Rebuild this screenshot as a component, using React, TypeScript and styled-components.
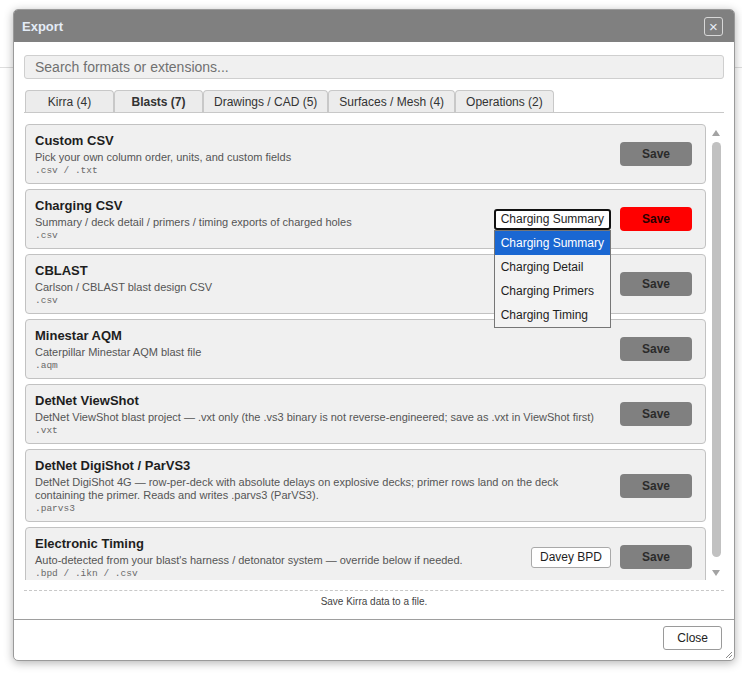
import React from 'react'
import styled, { createGlobalStyle } from 'styled-components'

interface ExportFormat {
  name: string
  description: string
  extensions: string
  options?: string[]
  picker?: string
  open?: boolean
  highlight?: boolean
}

const tabs = [
  { label: 'Kirra (4)' },
  { label: 'Blasts (7)', active: true },
  { label: 'Drawings / CAD (5)' },
  { label: 'Surfaces / Mesh (4)' },
  { label: 'Operations (2)' },
]

const formats: ExportFormat[] = [
  {
    name: 'Custom CSV',
    description: 'Pick your own column order, units, and custom fields',
    extensions: '.csv / .txt',
  },
  {
    name: 'Charging CSV',
    description: 'Summary / deck detail / primers / timing exports of charged holes',
    extensions: '.csv',
    options: ['Charging Summary', 'Charging Detail', 'Charging Primers', 'Charging Timing'],
    open: true,
    highlight: true,
  },
  {
    name: 'CBLAST',
    description: 'Carlson / CBLAST blast design CSV',
    extensions: '.csv',
  },
  {
    name: 'Minestar AQM',
    description: 'Caterpillar Minestar AQM blast file',
    extensions: '.aqm',
  },
  {
    name: 'DetNet ViewShot',
    description:
      'DetNet ViewShot blast project — .vxt only (the .vs3 binary is not reverse-engineered; save as .vxt in ViewShot first)',
    extensions: '.vxt',
  },
  {
    name: 'DetNet DigiShot / ParVS3',
    description:
      'DetNet DigiShot 4G — row-per-deck with absolute delays on explosive decks; primer rows land on the deck containing the primer. Reads and writes .parvs3 (ParVS3).',
    extensions: '.parvs3',
  },
  {
    name: 'Electronic Timing',
    description: "Auto-detected from your blast's harness / detonator system — override below if needed.",
    extensions: '.bpd / .ikn / .csv',
    picker: 'Davey BPD',
  },
]

const GlobalStyle = createGlobalStyle`
  * { box-sizing: border-box; }
  body {
    margin: 0;
    background: #fff;
    font-family: "Liberation Sans", Arial, sans-serif;
  }
`

const Page = styled.div`
  position: relative;
  width: 742px;
  height: 673px;
  overflow: hidden;
`

const PageBar = styled.div`
  height: 68px;
  border-bottom: 1px solid #dedede;
`

const Dialog = styled.div`
  position: absolute;
  left: 13px;
  top: 9px;
  width: 722px;
  display: flex;
  flex-direction: column;
  background: #fff;
  border: 1px solid #9a9a9a;
  border-radius: 5px;
  box-shadow: 0 2px 10px rgba(0, 0, 0, 0.3);
`

const Header = styled.div`
  height: 32px;
  display: flex;
  align-items: center;
  justify-content: space-between;
  padding: 0 11px 0 8px;
  background: #808080;
  border-radius: 4px 4px 0 0;
`

const Title = styled.span`
  color: #e4ecf7;
  font-size: 13px;
  font-weight: bold;
`

const HeaderClose = styled.button`
  width: 19px;
  height: 19px;
  padding: 0;
  display: flex;
  align-items: center;
  justify-content: center;
  background: transparent;
  border: 1px solid #d8d8d8;
  border-radius: 3px;
  color: #e8eef8;
  font-family: "Liberation Sans", Arial, sans-serif;
  font-size: 15px;
  line-height: 1;
`

const Body = styled.div`
  padding: 13px 10px 0;
  display: flex;
  flex-direction: column;
`

const Search = styled.input`
  height: 24px;
  padding: 0 10px;
  background: #f0f0f0;
  border: 1px solid #cfcfcf;
  border-radius: 3px;
  font-family: "Liberation Sans", Arial, sans-serif;
  font-size: 14px;
  color: #333;
  outline: none;

  &::placeholder {
    color: #707070;
  }
`

const TabBar = styled.div`
  margin-top: 11px;
  display: flex;
  padding-left: 1px;
  border-bottom: 1px solid #c8c8c8;
`

const Tab = styled.button<{ $active?: boolean }>`
  height: 22px;
  min-width: 89px;
  padding: 0 10px;
  background: #ececec;
  border: 1px solid #c8c8c8;
  border-bottom: none;
  border-radius: 4px 4px 0 0;
  font-family: "Liberation Sans", Arial, sans-serif;
  font-size: 12px;
  font-weight: ${(p) => (p.$active ? 'bold' : 'normal')};
  color: #333;
`

const ListArea = styled.div`
  margin-top: 11px;
  height: 456px;
  display: flex;
  gap: 2px;
`

const CardColumn = styled.div`
  flex: 1;
  padding-left: 1px;
  display: flex;
  flex-direction: column;
  gap: 5px;
  overflow: hidden;
`

const Card = styled.div`
  flex-shrink: 0;
  display: flex;
  align-items: center;
  gap: 16px;
  padding: 6px 13px 6px 9px;
  background: #f0f0f0;
  border: 1px solid #c2c2c2;
  border-radius: 4px;
`

const Info = styled.div`
  flex: 1;
  min-width: 0;
  padding-top: 1px;
`

const Name = styled.div`
  font-size: 13px;
  line-height: 18px;
  font-weight: bold;
  color: #1e1e1e;
`

const Description = styled.div`
  margin-top: 1px;
  font-size: 11px;
  line-height: 13px;
  color: #555;
`

const Extensions = styled.div`
  font-family: "Liberation Mono", "DejaVu Sans Mono", monospace;
  font-size: 9.5px;
  line-height: 13px;
  color: #6a6a6a;
`

const Controls = styled.div`
  display: flex;
  align-items: center;
  gap: 9px;
`

const SaveButton = styled.button<{ $hot?: boolean }>`
  width: 72px;
  height: 24px;
  padding: 0;
  background: ${(p) => (p.$hot ? '#ff0000' : '#808080')};
  border: none;
  border-radius: 4px;
  font-family: "Liberation Sans", Arial, sans-serif;
  font-size: 12px;
  font-weight: bold;
  color: ${(p) => (p.$hot ? '#2a0000' : '#2b2b2b')};
`

const SelectWrap = styled.div`
  position: relative;
`

const SelectBox = styled.div<{ $focused?: boolean }>`
  height: 21px;
  min-width: ${(p) => (p.$focused ? '117px' : '0')};
  padding: 0 ${(p) => (p.$focused ? '5px' : '8px')};
  display: flex;
  align-items: center;
  background: #fff;
  border: ${(p) => (p.$focused ? '2px solid #111' : '1px solid #a9a9a9')};
  border-radius: 3px;
  font-size: 12px;
  color: #1e1e1e;
  white-space: nowrap;
`

const OptionList = styled.ul`
  position: absolute;
  top: 100%;
  left: 0;
  z-index: 10;
  width: 117px;
  margin: 0;
  padding: 0;
  list-style: none;
  background: #f3f3f3;
  border: 1px solid #767676;
`

const OptionItem = styled.li<{ $selected?: boolean }>`
  height: 24px;
  padding-left: 6px;
  display: flex;
  align-items: center;
  font-size: 12px;
  white-space: nowrap;
  background: ${(p) => (p.$selected ? '#1a67d2' : 'transparent')};
  color: ${(p) => (p.$selected ? '#fff' : '#1e1e1e')};
`

const ScrollTrack = styled.div`
  width: 16px;
  display: flex;
  flex-direction: column;
  align-items: center;
`

const Arrow = styled.div<{ $down?: boolean }>`
  width: 0;
  height: 0;
  margin-top: ${(p) => (p.$down ? '13px' : '6px')};
  border-left: 4.5px solid transparent;
  border-right: 4.5px solid transparent;
  ${(p) =>
    p.$down ? 'border-top: 6px solid #a3a3a3;' : 'border-bottom: 6px solid #a3a3a3;'}
`

const Thumb = styled.div`
  margin-top: 6px;
  width: 9px;
  height: 415px;
  border-radius: 5px;
  background: #c1c1c1;
`

const Hint = styled.div`
  margin-top: 10px;
  padding-top: 5px;
  border-top: 1px dashed #c8c8c8;
  text-align: center;
  font-size: 10px;
  line-height: 12px;
  color: #444;
`

const Footer = styled.div`
  margin-top: 11px;
  padding: 6px 12px 10px;
  display: flex;
  justify-content: flex-end;
  border-top: 1px solid #9e9e9e;
`

const CloseButton = styled.button`
  height: 24px;
  padding: 0 13px;
  background: #fff;
  border: 1px solid #9a9a9a;
  border-radius: 3px;
  font-family: "Liberation Sans", Arial, sans-serif;
  font-size: 12px;
  color: #222;
`

const Grip = styled.svg`
  position: absolute;
  right: 1px;
  bottom: 1px;
`

function FormatCard({ format }: { format: ExportFormat }) {
  return (
    <Card>
      <Info>
        <Name>{format.name}</Name>
        <Description>{format.description}</Description>
        <Extensions>{format.extensions}</Extensions>
      </Info>
      <Controls>
        {format.options && (
          <SelectWrap>
            <SelectBox $focused>{format.options[0]}</SelectBox>
            {format.open && (
              <OptionList>
                {format.options.map((o, i) => (
                  <OptionItem key={o} $selected={i === 0}>
                    {o}
                  </OptionItem>
                ))}
              </OptionList>
            )}
          </SelectWrap>
        )}
        {format.picker && <SelectBox>{format.picker}</SelectBox>}
        <SaveButton $hot={format.highlight}>Save</SaveButton>
      </Controls>
    </Card>
  )
}

export default function App() {
  return (
    <>
      <GlobalStyle />
      <Page>
        <PageBar />
        <Dialog>
          <Header>
            <Title>Export</Title>
            <HeaderClose>×</HeaderClose>
          </Header>
          <Body>
            <Search placeholder="Search formats or extensions..." />
            <TabBar>
              {tabs.map((t) => (
                <Tab key={t.label} $active={t.active}>
                  {t.label}
                </Tab>
              ))}
            </TabBar>
            <ListArea>
              <CardColumn>
                {formats.map((f) => (
                  <FormatCard key={f.name} format={f} />
                ))}
              </CardColumn>
              <ScrollTrack>
                <Arrow />
                <Thumb />
                <Arrow $down />
              </ScrollTrack>
            </ListArea>
            <Hint>Save Kirra data to a file.</Hint>
          </Body>
          <Footer>
            <CloseButton>Close</CloseButton>
          </Footer>
          <Grip width="9" height="9" viewBox="0 0 9 9">
            <path d="M8 2 L2 8 M8 5 L5 8" stroke="#8a8a8a" strokeWidth="1" />
          </Grip>
        </Dialog>
      </Page>
    </>
  )
}
